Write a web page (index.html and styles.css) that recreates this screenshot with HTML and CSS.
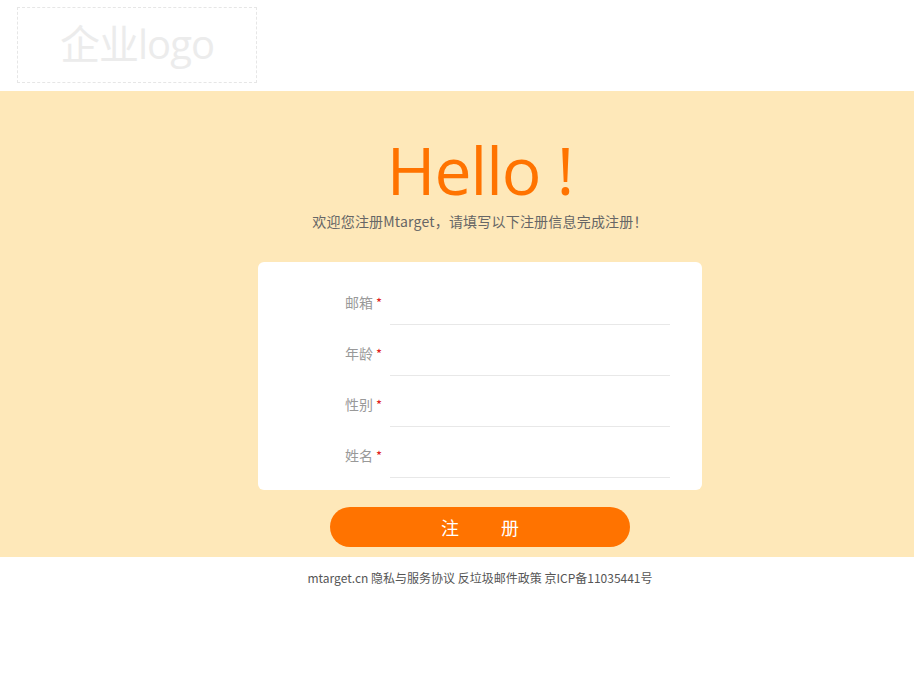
FILE: index.html
```html
<!DOCTYPE html>
<html lang="zh-CN">
<head>
<meta charset="utf-8">
<title>注册</title>
<link rel="stylesheet" href="styles.css">
</head>
<body>
<header class="header">
  <div class="logo">企业logo</div>
</header>
<main class="band">
  <div class="band-inner">
    <h1 class="hello">Hello !</h1>
    <p class="welcome">欢迎您注册Mtarget，请填写以下注册信息完成注册！</p>
    <form class="card">
      <div class="row"><label class="label">邮箱<span class="req">*</span></label><span class="field"></span></div>
      <div class="row"><label class="label">年龄<span class="req">*</span></label><span class="field"></span></div>
      <div class="row"><label class="label">性别<span class="req">*</span></label><span class="field"></span></div>
      <div class="row"><label class="label">姓名<span class="req">*</span></label><span class="field"></span></div>
    </form>
    <button class="submit" type="button">注<span class="gap"></span>册</button>
  </div>
</main>
<footer class="footer">mtarget.cn 隐私与服务协议 反垃圾邮件政策 京ICP备11035441号</footer>
</body>
</html>
```
FILE: styles.css
```css
html, body {
  margin: 0;
  padding: 0;
  background: #fff;
  font-family: "Noto Sans CJK SC", "Noto Sans", sans-serif;
}
.header {
  height: 91px;
  padding: 7px 0 0 17px;
  box-sizing: border-box;
}
.logo {
  width: 240px;
  height: 76px;
  box-sizing: border-box;
  border: 1px dashed #e6e6e6;
  color: #ececec;
  font-family: "Open Sans", "Noto Sans CJK SC", sans-serif;
  font-size: 40px;
  line-height: 72px;
  text-align: center;
  letter-spacing: -1px;
}
.band {
  background: #fee8b9;
  height: 466px;
}
.band-inner {
  display: flex;
  flex-direction: column;
  align-items: center;
  padding: 40px 0 0 46px;
}
.hello {
  margin: 0;
  font-family: "Open Sans", "Noto Sans CJK SC", sans-serif;
  font-weight: 400;
  font-size: 66px;
  line-height: 76px;
  letter-spacing: -1px;
  color: #ff7300;
}
.welcome {
  margin: 4px 0 0;
  font-size: 14px;
  line-height: 20px;
  color: #666;
  letter-spacing: 0.2px;
}
.card {
  margin-top: 31px;
  width: 444px;
  height: 228px;
  box-sizing: border-box;
  background: #fff;
  border-radius: 6px;
  padding-top: 12px;
}
.row {
  display: flex;
  align-items: flex-end;
  height: 51px;
}
.label {
  width: 124px;
  text-align: right;
  font-size: 14px;
  color: #999;
  line-height: 20px;
  padding-bottom: 12px;
}
.req {
  color: #e02020;
  margin-left: 3px;
  font-size: 13px;
}
.field {
  margin-left: 8px;
  width: 280px;
  height: 0;
  border-bottom: 1px solid #e8e8e8;
}
.submit {
  margin-top: 17px;
  width: 300px;
  height: 40px;
  border: 0;
  border-radius: 20px;
  background: #ff7300;
  color: #fff;
  font-family: inherit;
  font-size: 18px;
  line-height: 40px;
  padding: 0;
}
.gap {
  display: inline-block;
  width: 42px;
}
.footer {
  text-align: center;
  font-size: 12px;
  color: #555;
  padding: 13px 0 0 46px;
  line-height: 16px;
}
```
